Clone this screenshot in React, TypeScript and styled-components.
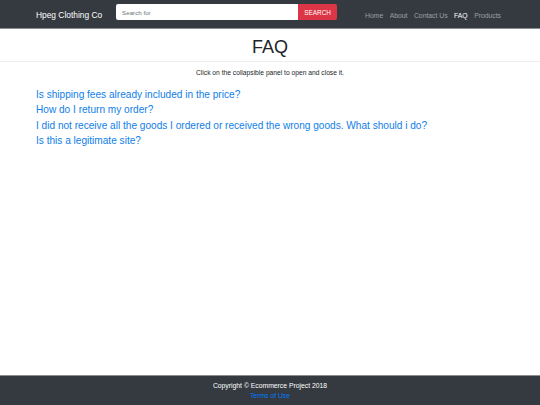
import React from "react";
import styled, { createGlobalStyle } from "styled-components";

const Global = createGlobalStyle`
  html, body { margin: 0; padding: 0; height: 100%; }
  body { font-family: "Liberation Sans", Arial, sans-serif; background: #fff; color: #212529; }
  #root { height: 100%; }
`;

const Page = styled.div`
  display: flex;
  flex-direction: column;
  height: 405px;
`;

const NavBar = styled.nav`
  height: 28px;
  background: #343a40;
  border-bottom: 1px solid #8a8d90;
  display: flex;
  align-items: center;
  padding: 0 39px 0 36px;
  box-sizing: content-box;
`;

const Brand = styled.a`
  color: #fff;
  font-size: 8.4px;
  margin-right: 14px;
  white-space: nowrap;
  position: relative;
  top: 1px;
`;

const SearchForm = styled.form`
  display: flex;
  height: 16px;
  margin: 0;
  position: relative;
  top: -2px;
`;

const SearchInput = styled.input`
  width: 182px;
  height: 16px;
  box-sizing: border-box;
  border: none;
  border-radius: 2px 0 0 2px;
  padding: 0 6px;
  font-family: "Liberation Sans", Arial, sans-serif;
  font-size: 6.2px;
  color: #495057;
  outline: none;
  &::placeholder { color: #6c757d; }
`;

const SearchButton = styled.button`
  width: 39px;
  height: 16px;
  border: none;
  border-radius: 0 2px 2px 0;
  background: #dc3545;
  color: #fff;
  font-family: "Liberation Sans", Arial, sans-serif;
  font-size: 6.4px;
  padding: 0;
`;

const NavLinks = styled.ul`
  display: flex;
  list-style: none;
  margin: 0 0 0 auto;
  padding: 0;
  gap: 6.5px;
  position: relative;
  top: 1px;
`;

const NavLink = styled.li<{ $active?: boolean }>`
  font-size: 6.8px;
  color: ${(p) => (p.$active ? "#fff" : "rgba(255,255,255,0.5)")};
`;

const Header = styled.div`
  border-bottom: 1px solid #eceeef;
  height: 32px;
  display: flex;
  align-items: center;
  justify-content: center;
`;

const Title = styled.h1`
  margin: 0;
  font-size: 18px;
  font-weight: 400;
  color: #212529;
  position: relative;
  top: 2px;
`;

const Main = styled.main`
  flex: 1;
  padding: 0 36px;
`;

const Hint = styled.p`
  font-size: 6.7px;
  text-align: center;
  margin: 7px 0 11px;
  color: #212529;
`;

const Question = styled.a`
  display: block;
  color: #0f7ee8;
  font-size: 10.1px;
  line-height: 15.4px;
  text-decoration: none;
`;

const Footer = styled.footer`
  height: 29px;
  background: #343a40;
  border-top: 1px solid #8a8d90;
  display: flex;
  flex-direction: column;
  align-items: center;
  justify-content: center;
  gap: 3px;
`;

const Copy = styled.div`
  color: #fff;
  font-size: 6.8px;
`;

const Terms = styled.a`
  color: #007bff;
  font-size: 6.8px;
`;

const questions = [
  "Is shipping fees already included in the price?",
  "How do I return my order?",
  "I did not receive all the goods I ordered or received the wrong goods. What should i do?",
  "Is this a legitimate site?",
];

export default function App() {
  return (
    <Page>
      <Global />
      <NavBar>
        <Brand>Hpeg Clothing Co</Brand>
        <SearchForm onSubmit={(e) => e.preventDefault()}>
          <SearchInput placeholder="Search for" />
          <SearchButton>SEARCH</SearchButton>
        </SearchForm>
        <NavLinks>
          <NavLink>Home</NavLink>
          <NavLink>About</NavLink>
          <NavLink>Contact Us</NavLink>
          <NavLink $active>FAQ</NavLink>
          <NavLink>Products</NavLink>
        </NavLinks>
      </NavBar>
      <Header>
        <Title>FAQ</Title>
      </Header>
      <Main>
        <Hint>Click on the collapsible panel to open and close it.</Hint>
        {questions.map((q) => (
          <Question key={q}>{q}</Question>
        ))}
      </Main>
      <Footer>
        <Copy>Copyright © Ecommerce Project 2018</Copy>
        <Terms>Terms of Use</Terms>
      </Footer>
    </Page>
  );
}
